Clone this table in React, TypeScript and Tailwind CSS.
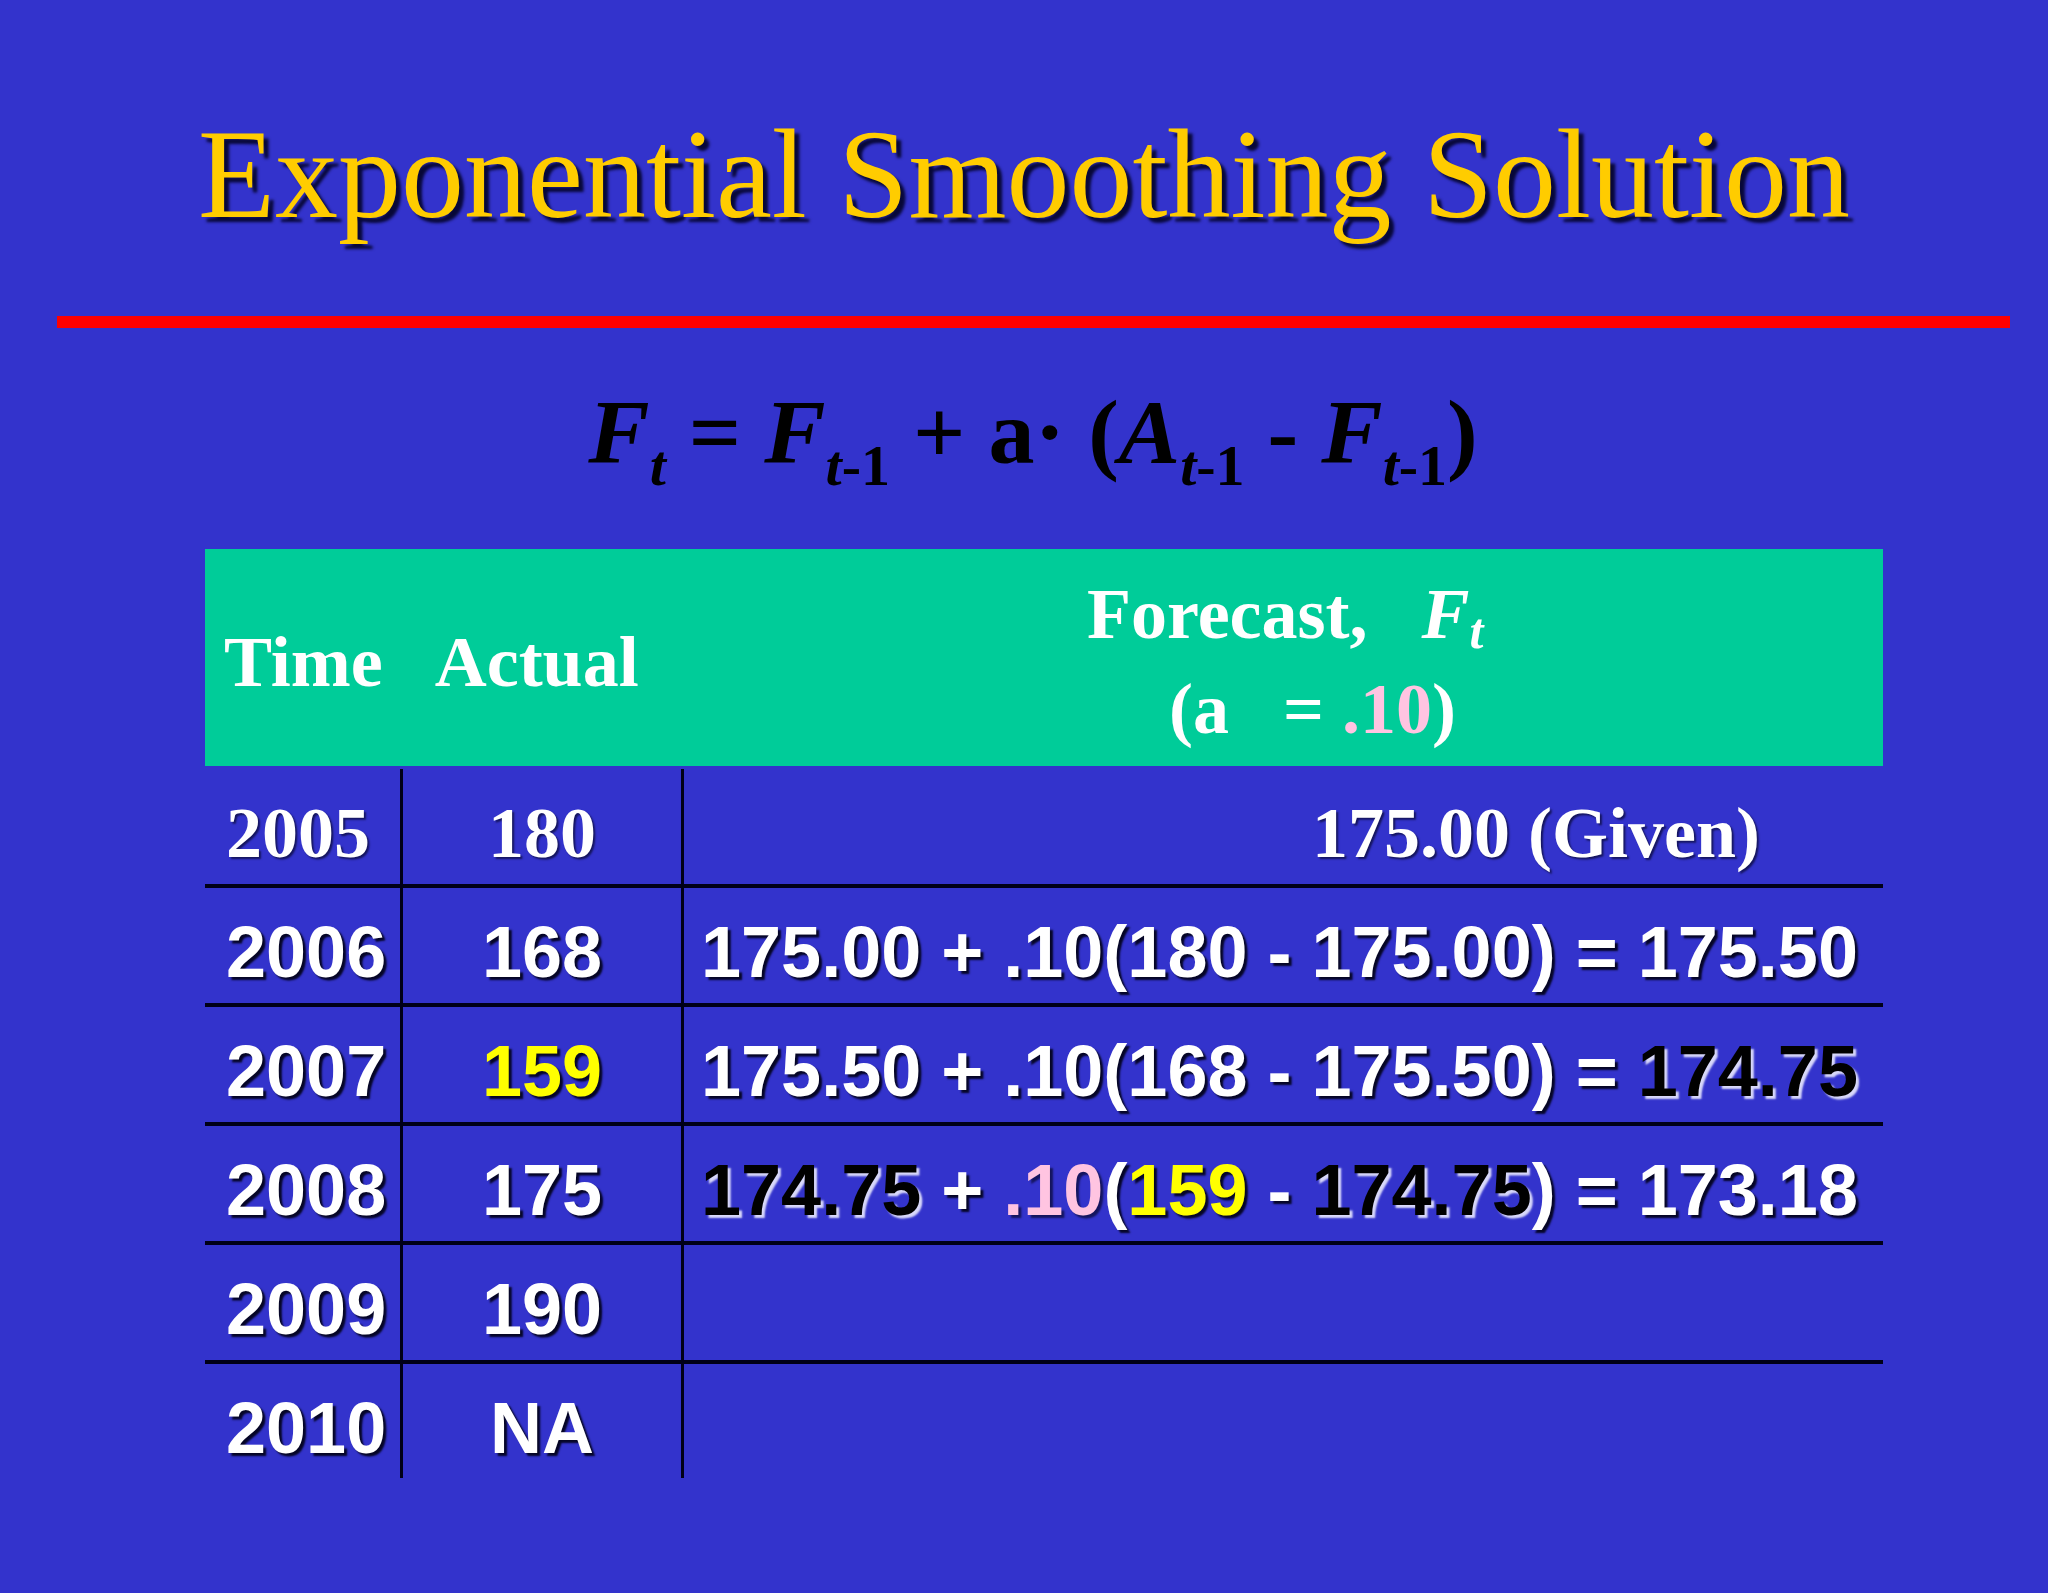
import React from 'react';

const serif = "font-['Liberation_Serif','Times_New_Roman',serif]";
const sans = "font-['Liberation_Sans',Arial,sans-serif]";

// white text with a dark drop shadow, black text with a light one
const W = ({ children }: { children: React.ReactNode }) => (
  <span className="text-white [text-shadow:3px_3px_2px_rgba(0,0,20,0.9)]">{children}</span>
);
const B = ({ children }: { children: React.ReactNode }) => (
  <span className="text-black [text-shadow:3px_3px_2px_rgba(235,235,255,0.9)]">{children}</span>
);
const Y = ({ children }: { children: React.ReactNode }) => (
  <span className="text-[#ffff00] [text-shadow:3px_3px_2px_rgba(0,0,20,0.9)]">{children}</span>
);
const P = ({ children }: { children: React.ReactNode }) => (
  <span className="text-[#ffc4e1] [text-shadow:3px_3px_2px_rgba(0,0,20,0.6)]">{children}</span>
);

function Sub({ children }: { children: React.ReactNode }) {
  return <span className="relative top-[22px] text-[58px]">{children}</span>;
}

type Row = { year: string; actual: React.ReactNode; forecast: React.ReactNode; serifRow?: boolean };

const rows: Row[] = [
  {
    year: '2005',
    actual: '180',
    forecast: <span className="pl-[611px]">175.00 (Given)</span>,
    serifRow: true,
  },
  {
    year: '2006',
    actual: <W>168</W>,
    forecast: <W>175.00 + .10(180 - 175.00) = 175.50</W>,
  },
  {
    year: '2007',
    actual: <Y>159</Y>,
    forecast: (
      <>
        <W>175.50 + .10(168 - 175.50) = </W>
        <B>174.75</B>
      </>
    ),
  },
  {
    year: '2008',
    actual: <W>175</W>,
    forecast: (
      <>
        <B>174.75</B>
        <W> + </W>
        <P>.10</P>
        <W>(</W>
        <Y>159</Y>
        <W> - </W>
        <B>174.75</B>
        <W>) = 173.18</W>
      </>
    ),
  },
  { year: '2009', actual: <W>190</W>, forecast: null },
  { year: '2010', actual: <W>NA</W>, forecast: null },
];

export default function App() {
  return (
    <div className="w-[2048px] h-[1593px] bg-[#3333cc] overflow-hidden flex flex-col">
      <h1
        className={`${serif} pt-[112px] text-center text-[126px] leading-none font-normal text-[#ffcc00] [text-shadow:5px_5px_3px_rgba(0,0,30,0.85)]`}
      >
        Exponential Smoothing Solution
      </h1>

      <div className="mt-[78px] ml-[57px] w-[1953px] h-[12px] bg-[#ff0000]" />

      <div className={`${serif} mt-[58px] pl-[18px] text-center text-[92px] leading-none font-bold text-black`}>
        <i>F</i>
        <Sub><i>t</i></Sub> = <i>F</i>
        <Sub><i>t</i>-1</Sub> + a· (<i>A</i>
        <Sub><i>t</i>-1</Sub> - <i>F</i>
        <Sub><i>t</i>-1</Sub>)
      </div>

      <div className="mt-[71px] ml-[205px] w-[1678px] flex flex-col">
        {/* header */}
        <div className={`${serif} h-[217px] bg-[#00cc99] flex font-bold text-white text-[72px] leading-none`}>
          <div className="w-[478px] pt-[77px] pl-[19px] flex gap-[52px]">
            <span>Time</span>
            <span>Actual</span>
          </div>
          <div className="flex-1 pt-[21px] leading-[88px]">
            <div className="pl-[404px] whitespace-pre">
              Forecast,{'   '}
              <i>F</i>
              <span className="relative top-[10px] text-[50px]"><i>t</i></span>
            </div>
            <div className="pl-[486px] whitespace-pre">
              (a{'   '}= <span className="text-[#ffc4e1]">.10</span>)
            </div>
          </div>
        </div>

        {/* body */}
        <div className="mt-[3px] flex flex-col">
          {rows.map((r, i) => (
            <div
              key={r.year}
              className={`flex ${i < rows.length - 1 ? 'h-[119px] border-b-4 border-[#000018]' : 'h-[114px]'}`}
            >
              <div
                className={`w-[198px] border-r-[3px] border-[#000018] pl-[21px] pt-[28px] text-[72px] leading-none font-bold ${
                  r.serifRow ? `${serif} text-white [text-shadow:2px_2px_2px_rgba(0,0,20,0.6)]` : sans
                }`}
              >
                {r.serifRow ? r.year : <W>{r.year}</W>}
              </div>
              <div
                className={`w-[281px] border-r-[3px] border-[#000018] pt-[28px] text-center text-[72px] leading-none font-bold ${
                  r.serifRow ? `${serif} text-white [text-shadow:2px_2px_2px_rgba(0,0,20,0.6)]` : sans
                }`}
              >
                {r.actual}
              </div>
              <div
                className={`flex-1 pl-[17px] pt-[28px] text-[72px] leading-none font-bold whitespace-pre ${
                  r.serifRow ? `${serif} text-white [text-shadow:2px_2px_2px_rgba(0,0,20,0.6)]` : sans
                }`}
              >
                {r.forecast}
              </div>
            </div>
          ))}
        </div>
      </div>
    </div>
  );
}
